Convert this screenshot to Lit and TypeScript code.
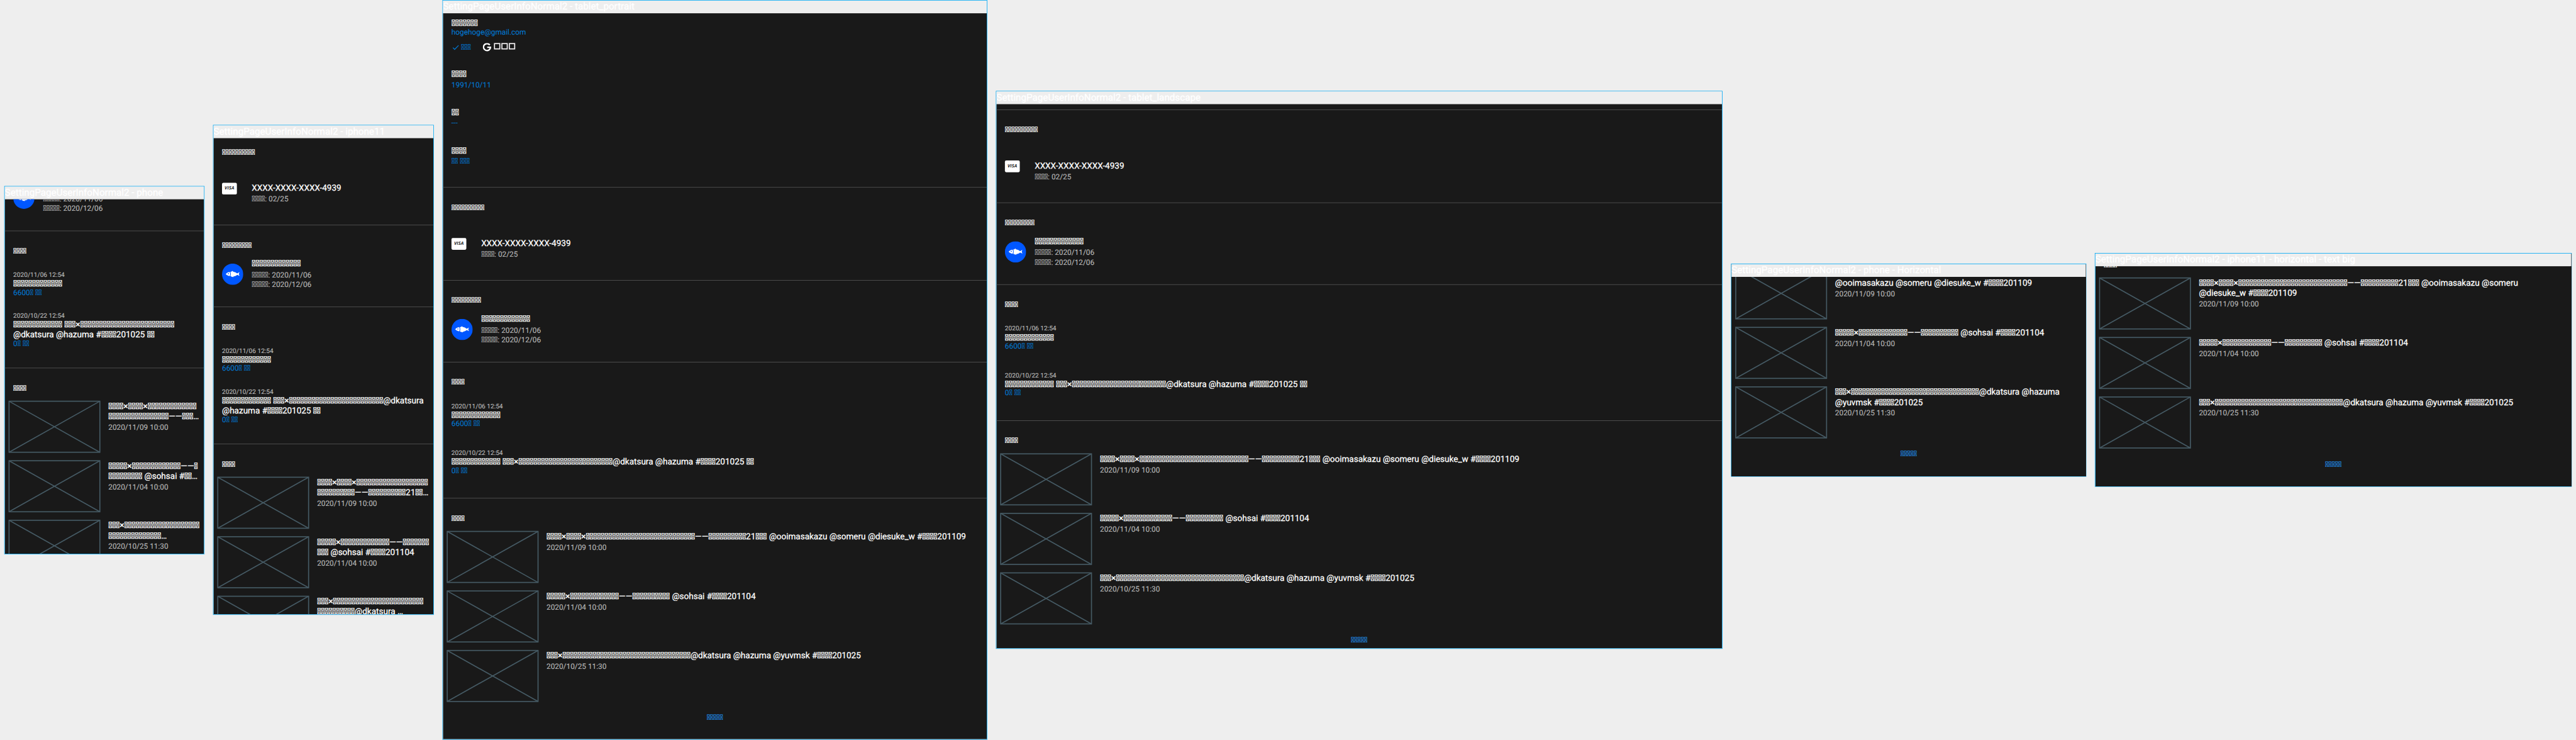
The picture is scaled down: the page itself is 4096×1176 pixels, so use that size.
import { LitElement, html, css, svg, nothing, type TemplateResult } from "lit";
import { customElement, property } from "lit/decorators.js";

/* An unassigned code point: the font has no glyph for it and draws its missing-glyph box. */
const box = (count: number) => "\u{3FFFD}".repeat(count);

type Kind = "profile" | "card" | "plan" | "history" | "videos";

interface Device {
  name: string;
  width: number;
  height: number;
  offset: number;
  sections: Kind[];
  tablet?: boolean;
  order: string[];
  videos: string[][];
}

const ORDER_HEAD = `${box(13)} ${box(3)}×${box(25)}`;
const TAG = (n: string) => `#${box(4)}${n}`;
const V1 = `${box(4)}×${box(4)}×${box(29)}——${box(10)}21${box(3)}`;
const V2 = `${box(5)}×${box(13)}——${box(10)} @sohsai ${TAG("201104")}`;
const V3 = `${box(3)}×${box(34)}@dkatsura @hazuma`;

const WIDE_ORDER = [`${ORDER_HEAD}@dkatsura @hazuma ${TAG("201025")} ${box(2)}`];
const WIDE_VIDEOS = [
  [`${V1} @ooimasakazu @someru @diesuke_w ${TAG("201109")}`],
  [V2],
  [`${V3} @yuvmsk ${TAG("201025")}`],
];

const DEVICES: Device[] = [
  {
    name: "phone",
    width: 375,
    height: 667,
    offset: -94.5,
    sections: ["plan", "history", "videos"],
    order: [ORDER_HEAD, `@dkatsura @hazuma ${TAG("201025")} ${box(2)}`],
    videos: [
      [`${box(4)}×${box(4)}×${box(13)}`, `${box(16)}——${box(3)}…`],
      [`${box(5)}×${box(13)}——${box(1)}`, `${box(9)} @sohsai #${box(2)}…`],
      [`${box(3)}×${box(20)}`, `${box(14)}…`],
    ],
  },
  {
    name: "iphone11",
    width: 414,
    height: 896,
    offset: -12,
    sections: ["card", "plan", "history", "videos"],
    order: [`${ORDER_HEAD}@dkatsura`, `@hazuma ${TAG("201025")} ${box(2)}`],
    videos: [
      [`${box(4)}×${box(4)}×${box(19)}`, `${box(10)}——${box(10)}21${box(2)}…`],
      [`${box(5)}×${box(13)}——${box(7)}`, `${box(3)} @sohsai ${TAG("201104")}`],
      [`${box(3)}×${box(24)}`, `${box(10)}@dkatsura …`],
    ],
  },
  {
    name: "tablet_portrait",
    width: 1024,
    height: 1366,
    offset: 0,
    tablet: true,
    sections: ["profile", "card", "plan", "history", "videos"],
    order: WIDE_ORDER,
    videos: WIDE_VIDEOS,
  },
  {
    name: "tablet_landscape",
    width: 1366,
    height: 1024,
    offset: 10,
    tablet: true,
    sections: ["card", "plan", "history", "videos"],
    order: WIDE_ORDER,
    videos: WIDE_VIDEOS,
  },
  {
    name: "phone - Horizontal",
    width: 667,
    height: 375,
    offset: -80,
    sections: ["videos"],
    order: [],
    videos: [
      [V1, `@ooimasakazu @someru @diesuke_w ${TAG("201109")}`],
      [V2],
      [V3, `@yuvmsk ${TAG("201025")}`],
    ],
  },
  {
    name: "iphone11 - horizontal - text big",
    width: 896,
    height: 414,
    offset: -41,
    sections: ["videos"],
    order: [],
    videos: [
      [`${V1} @ooimasakazu @someru`, `@diesuke_w ${TAG("201109")}`],
      [V2],
      [`${V3} @yuvmsk ${TAG("201025")}`],
    ],
  },
];

const VIDEO_DATES = ["2020/11/09 10:00", "2020/11/04 10:00", "2020/10/25 11:30"];

const lines = (rows: string[]) => rows.map((row) => html`<div class="title">${row}</div>`);

@customElement("device-frame")
export class DeviceFrame extends LitElement {
  @property({ attribute: false }) device!: Device;

  static styles = css`
    :host {
      display: block;
      flex: none;
      font-family: Roboto, sans-serif;
      font-weight: 400;
      text-rendering: geometricPrecision;
    }
    .frame {
      display: flex;
      flex-direction: column;
      box-sizing: border-box;
      border: 1px solid #03a9f4;
      overflow: hidden;
    }
    .name {
      flex: none;
      height: 24px;
      line-height: 23px;
      font-size: 18px;
      -webkit-text-stroke: 0.3px;
      color: #fff;
      background: #eee;
      white-space: pre;
    }
    .body {
      flex: 1;
      min-height: 0;
      overflow: hidden;
      background: #191919;
      display: flow-root;
    }
    .section {
      box-sizing: border-box;
      border-top: 1px solid #555;
      padding-top: 28px;
    }
    .heading {
      height: 20px;
      line-height: 20px;
      padding-left: 16px;
      font-size: 14px;
      -webkit-text-stroke: 0.25px;
      color: #fff;
    }
    .title {
      height: 19px;
      line-height: 19px;
      font-size: 16px;
      -webkit-text-stroke: 0.3px;
      color: #fff;
      white-space: pre;
    }
    .sub {
      height: 18px;
      line-height: 18px;
      font-size: 14px;
      color: #b8b8b8;
      -webkit-text-stroke: 0.15px;
      white-space: pre;
    }
    .blue {
      color: #0277d0;
    }
    .profile {
      height: 327px;
      box-sizing: border-box;
      padding: 8px 16px 0;
    }
    .linked {
      display: flex;
      align-items: center;
      height: 18px;
      margin-top: 10px;
    }
    .linked .sub {
      margin-left: 4px;
    }
    .check {
      width: 12px;
      height: 12px;
      margin-left: 2px;
    }
    .google {
      width: 16px;
      height: 16px;
      margin-left: 22px;
    }
    .squares {
      display: flex;
      gap: 2px;
      margin: 0 0 5px 5px;
    }
    .square {
      box-sizing: border-box;
      width: 12px;
      height: 12px;
      border: 2px solid #f5f2f4;
    }
    .field {
      height: 72px;
    }
    .fields {
      padding-top: 32px;
    }
    .field .sub {
      margin-top: 2px;
    }
    .card {
      height: 175px;
    }
    .plan {
      height: 154px;
    }
    .row {
      display: flex;
      padding-left: 16px;
    }
    .card .row {
      margin-top: 47px;
    }
    .plan .row {
      margin-top: 14px;
    }
    .lead {
      width: 40px;
      margin-right: 16px;
    }
    .visa {
      width: 28px;
      height: 21.5px;
      border-radius: 2.5px;
      background: #fff;
      color: #222;
      font: italic 700 8.5px/21px "Open Sans", sans-serif;
      letter-spacing: 0.2px;
      text-align: center;
    }
    .fish {
      display: block;
      width: 40px;
      height: 40px;
      margin-top: 9.5px;
    }
    .card .sub {
      margin-top: 3px;
    }
    .plan .first {
      margin-top: 4px;
    }
    .orders {
      padding: 27.5px 0 35.5px 16px;
      display: flex;
      flex-direction: column;
      gap: 28.5px;
    }
    .tablet .orders {
      gap: 39.5px;
      padding-bottom: 41.5px;
    }
    .when {
      height: 13px;
      line-height: 13px;
      font-size: 12px;
      color: #b8b8b8;
      -webkit-text-stroke: 0.15px;
    }
    .orders .sub {
      height: 17px;
      line-height: 17px;
    }
    .videos {
      padding-top: 6px;
    }
    .video {
      display: flex;
      gap: 16px;
      padding: 8px;
    }
    .thumb {
      flex: none;
      display: block;
      width: 171px;
      height: 96px;
      overflow: visible;
      fill: none;
      stroke: #455a64;
      stroke-width: 2;
    }
    .video .sub {
      margin-top: 3px;
    }
    .more {
      margin-top: 15px;
      line-height: 16px;
      font-size: 14px;
      -webkit-text-stroke: 0.25px;
      text-align: center;
      color: #2083dc;
    }
  `;

  private profile() {
    const field = (label: number, value: string) => html`
      <div class="field">
        <div class="title">${box(label)}</div>
        <div class="sub blue">${value}</div>
      </div>
    `;
    return html`
      <div class="profile">
        <div class="title">${box(7)}</div>
        <div class="sub blue">hogehoge@gmail.com</div>
        <div class="linked">
          <svg class="check" viewBox="0 0 12 12">
            <path d="M.6 6.6 4 10 11.4 2.4" fill="none" stroke="#0277d0" stroke-width="1.5" />
          </svg>
          <div class="sub blue">${box(3)}</div>
          <svg class="google" viewBox="0 0 16 16">
            <path
              d="M13.2 3.6A6.600 6.600 0 1 0 14.500 8H8.300"
              fill="none"
              stroke="#fff"
              stroke-width="2.800"
            />
          </svg>
          <div class="squares">
            <div class="square"></div>
            <div class="square"></div>
            <div class="square"></div>
          </div>
        </div>
        <div class="fields">
          ${field(4, "1991/10/11")} ${field(2, "---")} ${field(4, `${box(2)} ${box(3)}`)}
        </div>
      </div>
    `;
  }

  private card() {
    return html`
      <div class="section card">
        <div class="heading">${box(10)}</div>
        <div class="row">
          <div class="lead"><div class="visa">VISA</div></div>
          <div>
            <div class="title">XXXX-XXXX-XXXX-4939</div>
            <div class="sub">${box(4)}: 02/25</div>
          </div>
        </div>
      </div>
    `;
  }

  private plan() {
    return html`
      <div class="section plan">
        <div class="heading">${box(9)}</div>
        <div class="row">
          <div class="lead">
            <svg class="fish" viewBox="0 0 40 40">
              <circle cx="20" cy="20" r="20" fill="#0057ff" />
              <path
                fill="#fff"
                d="M7 19.700C9.500 16.800 12 15.900 14.500 15.700C15.700 18.200 15.700 21 14.500 23.500C12 23.200 9.500 22.300 7 19.700Z"
              />
              <path
                fill="#fff"
                d="M15.800 15.500C17 15.400 18 15.200 18.800 14.400L20 13.800L21 15.200C24 15.700 26.800 17 28.600 18.600L32.900 16.200L31.600 19.700L33 23.200L28.600 21C26.800 22.600 24.300 23.800 21.800 24.200L20.800 25.600L19.400 24.600L18 25L17.200 23.900L15.800 23.700C16.800 21 16.800 18.200 15.800 15.500Z"
              />
              <circle cx="12" cy="19" r="1" fill="#0057ff" />
            </svg>
          </div>
          <div>
            <div class="title">${box(13)}</div>
            <div class="sub first">${box(5)}: 2020/11/06</div>
            <div class="sub">${box(5)}: 2020/12/06</div>
          </div>
        </div>
      </div>
    `;
  }

  private history() {
    return html`
      <div class="section">
        <div class="heading">${box(4)}</div>
        <div class="orders">
          <div>
            <div class="when">2020/11/06 12:54</div>
            <div class="title">${box(13)}</div>
            <div class="sub blue">6600${box(1)} ${box(2)}</div>
          </div>
          <div>
            <div class="when">2020/10/22 12:54</div>
            ${lines(this.device.order)}
            <div class="sub blue">0${box(1)} ${box(2)}</div>
          </div>
        </div>
      </div>
    `;
  }

  private videos() {
    return html`
      <div class="section">
        <div class="heading">${box(4)}</div>
        <div class="videos">
          ${this.device.videos.map(
            (rows, i) => html`
              <div class="video">
                <svg class="thumb" viewBox="0 0 171 96">
                  ${svg`<rect width="171" height="96" /><path d="M0 0 171 96M171 0 0 96" />`}
                </svg>
                <div>
                  ${lines(rows)}
                  <div class="sub">${VIDEO_DATES[i]}</div>
                </div>
              </div>
            `
          )}
        </div>
        <div class="more">${box(5)}</div>
      </div>
    `;
  }

  private section(kind: Kind): TemplateResult {
    switch (kind) {
      case "profile":
        return this.profile();
      case "card":
        return this.card();
      case "plan":
        return this.plan();
      case "history":
        return this.history();
      case "videos":
        return this.videos();
    }
  }

  render() {
    const d = this.device;
    if (!d) return nothing;
    return html`
      <div class="frame" style="width:${d.width + 2}px;height:${d.height + 26}px">
        <div class="name">SettingPageUserInfoNormal2 - ${d.name}</div>
        <div class="body ${d.tablet ? "tablet" : ""}">
          <div style="margin-top:${d.offset}px">${d.sections.map((s) => this.section(s))}</div>
        </div>
      </div>
    `;
  }
}

@customElement("app-root")
export class AppRoot extends LitElement {
  static styles = css`
    :host {
      display: block;
      width: 4096px;
      height: 1176px;
      overflow: hidden;
      background: #eee;
    }
    .board {
      display: flex;
      align-items: center;
      gap: 16px;
      box-sizing: border-box;
      width: 4850px;
      height: 1392px;
      padding: 0 8px;
      transform: scale(0.844536);
      transform-origin: 0 0;
    }
  `;

  render() {
    return html`
      <div class="board">
        ${DEVICES.map((d) => html`<device-frame .device=${d}></device-frame>`)}
      </div>
    `;
  }
}
